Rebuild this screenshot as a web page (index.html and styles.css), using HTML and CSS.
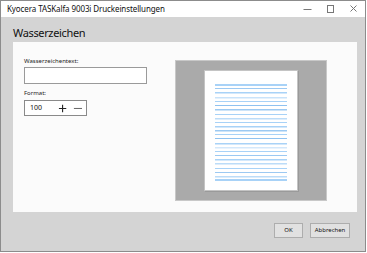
FILE: index.html
```html
<!DOCTYPE html>
<html lang="de">
<head>
<meta charset="utf-8">
<title>Kyocera TASKalfa 9003i Druckeinstellungen</title>
<link rel="stylesheet" href="styles.css">
</head>
<body>
<div class="window">
  <div class="titlebar">
    <span class="title">Kyocera TASKalfa 9003i Druckeinstellungen</span>
    <div class="controls">
      <svg class="ctl" width="23" height="16" viewBox="0 0 23 16"><line x1="7.5" y1="8.5" x2="15.5" y2="8.5" stroke="#777" stroke-width="1"/></svg>
      <svg class="ctl" width="23" height="16" viewBox="0 0 23 16"><rect x="8.5" y="4.5" width="6" height="7" fill="none" stroke="#777" stroke-width="1"/></svg>
      <svg class="ctl" width="23" height="16" viewBox="0 0 23 16"><path d="M8.5 4.5 L14.5 10.5 M14.5 4.5 L8.5 10.5" stroke="#777" stroke-width="1"/></svg>
    </div>
  </div>
  <div class="body">
    <h1 class="heading">Wasserzeichen</h1>
    <div class="panel">
      <div class="form">
        <label class="label">Wasserzeichentext:</label>
        <div class="textbox"></div>
        <label class="label label-format">Format:</label>
        <div class="spin">
          <span class="spin-value">100</span>
          <svg class="spin-btn" width="10" height="10" viewBox="0 0 10 10"><path d="M1 5.5 H9 M5 1.5 V9.5" stroke="#222" stroke-width="1.2"/></svg>
          <svg class="spin-btn" width="10" height="10" viewBox="0 0 10 10"><path d="M1 5.5 H10" stroke="#555" stroke-width="1"/></svg>
        </div>
      </div>
      <div class="preview">
        <div class="page">
          <svg width="72" height="97" viewBox="0 0 72 97">
            <g fill="#a8d2f7">
              <rect x="0" y="0" width="72" height="2"/>
              <rect x="0" y="4" width="72" height="1" fill="#9cc9f2"/>
              <rect x="0" y="8" width="72" height="1.5"/>
              <rect x="0" y="13" width="72" height="1.5" fill="#c9e3fa"/>
              <rect x="0" y="17" width="72" height="1"/>
              <rect x="0" y="21" width="72" height="1" fill="#8fc2f0"/>
              <rect x="0" y="25" width="72" height="1.5" fill="#9cc9f2"/>
              <rect x="0" y="30" width="72" height="1"/>
              <rect x="0" y="34" width="72" height="1.5" fill="#bcdcf8"/>
              <rect x="0" y="38" width="72" height="1"/>
              <rect x="0" y="42" width="72" height="1.5"/>
              <rect x="0" y="46" width="72" height="1.5" fill="#9cc9f2"/>
              <rect x="0" y="50" width="72" height="1"/>
              <rect x="0" y="54" width="72" height="1" fill="#8fc2f0"/>
              <rect x="0" y="59" width="72" height="1.5"/>
              <rect x="0" y="63" width="72" height="1.5" fill="#d3e8fb"/>
              <rect x="0" y="67" width="72" height="1"/>
              <rect x="0" y="71" width="72" height="1" fill="#9cc9f2"/>
              <rect x="0" y="75" width="72" height="1.5"/>
              <rect x="0" y="79" width="72" height="1.5" fill="#bcdcf8"/>
              <rect x="0" y="84" width="72" height="1"/>
              <rect x="0" y="88" width="72" height="1" fill="#9cc9f2"/>
              <rect x="0" y="92" width="72" height="1.5" fill="#bcdcf8"/>
              <rect x="0" y="95" width="72" height="2"/>
            </g>
          </svg>
        </div>
      </div>
    </div>
    <div class="buttons">
      <button class="btn btn-ok">OK</button>
      <button class="btn btn-cancel">Abbrechen</button>
    </div>
  </div>
</div>
</body>
</html>
```
FILE: styles.css
```css
html, body {
  margin: 0;
  padding: 0;
  background: #ffffff;
}
body {
  font-family: "Noto Sans", "Open Sans", sans-serif;
  color: #000;
}
.window {
  width: 364px;
  height: 250px;
  border: 1px solid #8c8c8c;
  background: #d4d4d4;
  display: flex;
  flex-direction: column;
}
.titlebar {
  height: 16px;
  background: #ffffff;
  display: flex;
  align-items: center;
  justify-content: space-between;
}
.title {
  font-size: 8px;
  line-height: 16px;
  padding-left: 6px;
  color: #111;
  white-space: nowrap;
  letter-spacing: -0.1px;
}
.controls {
  display: flex;
}
.ctl {
  display: block;
}
.body {
  flex: 1;
  display: flex;
  flex-direction: column;
  padding: 0 8px 0 12px;
}
.heading {
  margin: 0;
  font-weight: normal;
  font-size: 11px;
  letter-spacing: -0.35px;
  line-height: 16px;
  height: 16px;
  padding-top: 8px;
  padding-bottom: 1px;
  color: #111;
}
.panel {
  height: 170px;
  background: #fbfbfb;
  display: flex;
  align-items: flex-start;
  padding-left: 11px;
}
.form {
  width: 124px;
  margin-top: 15px;
  display: flex;
  flex-direction: column;
  align-items: flex-start;
}
.label {
  font-size: 6px;
  line-height: 9px;
  height: 9px;
  color: #222;
}
.textbox {
  margin-top: 1px;
  width: 121px;
  height: 15px;
  border: 1px solid #9a9a9a;
  background: #fff;
}
.label-format {
  margin-top: 5px;
}
.spin {
  margin-top: 2px;
  width: 61px;
  height: 14px;
  border: 1px solid #8a8a8a;
  background: #fff;
  display: flex;
  align-items: center;
}
.spin-value {
  font-size: 7px;
  line-height: 14px;
  margin-left: 5px;
  width: 28px;
  color: #111;
}
.spin-btn {
  display: block;
  margin-left: 2px;
  margin-right: 4px;
}
.preview {
  margin-top: 18px;
  margin-left: 27px;
  width: 150px;
  height: 139px;
  border: 1px solid #c8c8c8;
  background: #aaaaaa;
  display: flex;
  justify-content: center;
  align-items: center;
}
.page {
  background: #ffffff;
  border: 1px solid #c4c4c4;
  box-shadow: 1px 1px 0 #9a9a9a;
  padding: 13px 10px 9px 10px;
  display: flex;
  justify-content: center;
}
.page svg {
  display: block;
}
.buttons {
  display: flex;
  justify-content: flex-end;
  gap: 7px;
  margin-top: 11px;
  padding-right: 7px;
}
.btn {
  height: 15px;
  padding: 0;
  border: 1px solid #adadad;
  background: #e1e1e1;
  font-family: "Noto Sans", "Open Sans", sans-serif;
  font-size: 6px;
  line-height: 13px;
  color: #111;
}
.btn-ok {
  width: 29px;
}
.btn-cancel {
  width: 40px;
}
```
